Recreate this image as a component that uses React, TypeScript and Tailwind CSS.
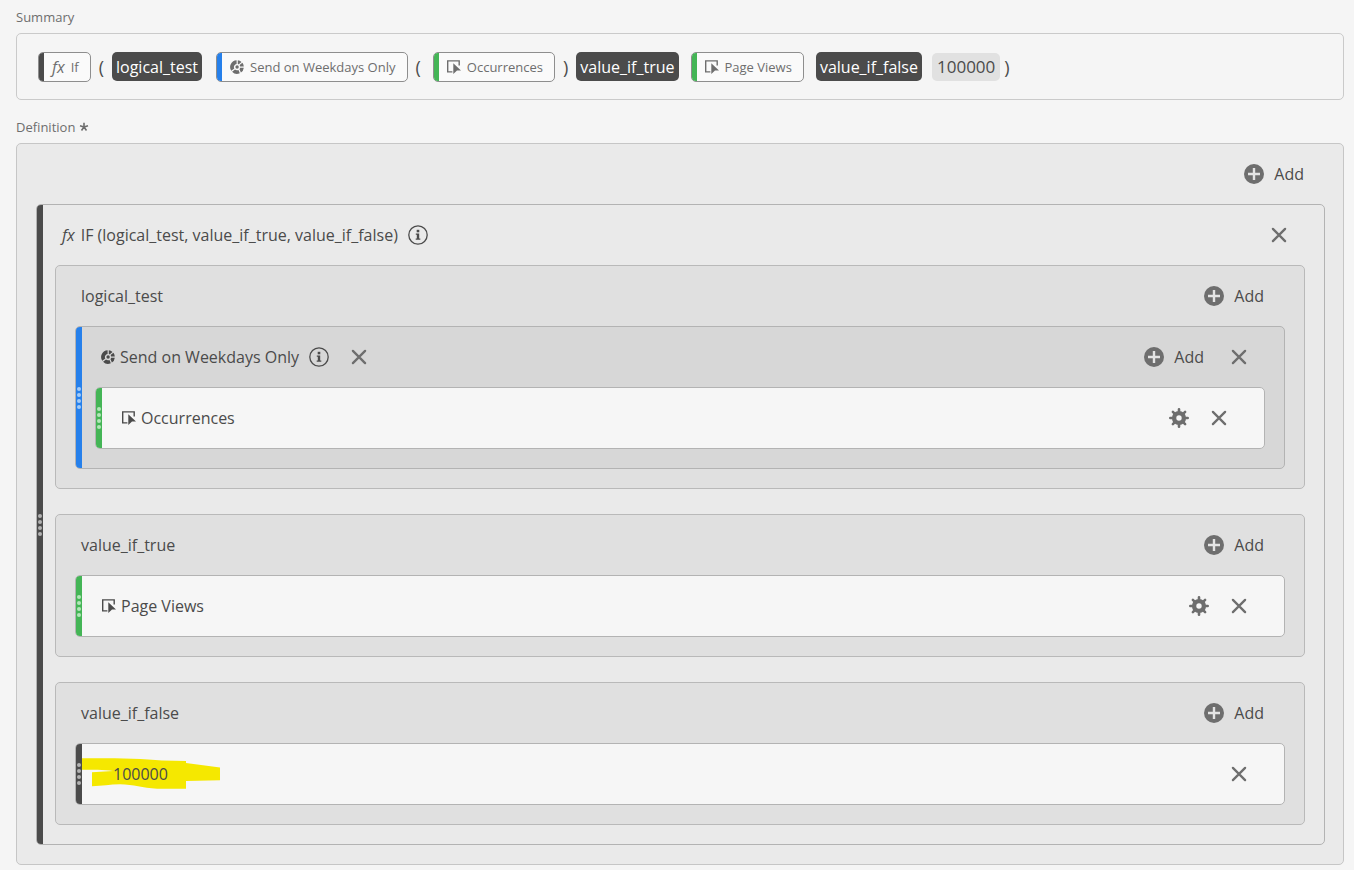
import type { ReactNode } from 'react'
import clsx from 'clsx'

type Accent = 'dark' | 'blue' | 'green'

const BAR_COLORS: Record<Accent, string> = {
  dark: 'bg-[#4b4b4b]',
  blue: 'bg-[#2680eb]',
  green: 'bg-[#44b556]',
}

const DOT_COLORS: Record<Accent, string> = {
  dark: 'bg-[#b3b3b3]',
  blue: 'bg-[#a3cbf8]',
  green: 'bg-[#b2e6b8]',
}

function FxMark({ className }: { className?: string }) {
  return <span className={clsx('text-[16px] italic', className)}>fx</span>
}

function MetricIcon() {
  return (
    <svg viewBox="0 0 14 14" className="size-3.5 shrink-0" aria-hidden="true">
      <path
        d="M5.4 11.9H0.7V0.9H12.2V5.6"
        fill="none"
        stroke="currentColor"
        strokeWidth="1.4"
      />
      <path d="M6.3 3.2L14 10.6H10L6.3 14Z" fill="currentColor" />
    </svg>
  )
}

function SegmentIcon() {
  return (
    <svg viewBox="0 0 14 14" className="size-3.5 shrink-0" aria-hidden="true">
      <path
        d="M6.6 0.2A6.8 6.8 0 0 0 1.3 10.8L4.3 8.6A3.2 3.2 0 0 1 6.6 3.9Z"
        fill="currentColor"
      />
      <path
        d="M2.1 11.7A6.8 6.8 0 0 0 9.8 13.2L8.5 9.9A3.2 3.2 0 0 1 5 9.5Z"
        fill="currentColor"
      />
      <path d="M10.9 12.6A6.8 6.8 0 0 0 13.8 7.7H10.1A3.2 3.2 0 0 1 9.5 9.2Z" fill="currentColor" />
      <path d="M13.8 6.5A6.8 6.8 0 0 0 12.4 2.8L9.6 5.1A3.2 3.2 0 0 1 10.1 6.5Z" fill="currentColor" />
      <path d="M11.5 1.9A6.8 6.8 0 0 0 7.8 0.2V3.9A3.2 3.2 0 0 1 8.8 4.3Z" fill="currentColor" />
      <circle cx="7.1" cy="7" r="1.7" fill="currentColor" />
    </svg>
  )
}

function InfoButton() {
  return (
    <button type="button" aria-label="Info" className="ml-2.5 size-5 text-[#4b4b4b]">
      <svg viewBox="0 0 20 20" className="size-5" aria-hidden="true">
        <circle cx="10" cy="10" r="9.2" fill="none" stroke="currentColor" strokeWidth="1.3" />
        <rect x="8.7" y="4.8" width="2.6" height="2.5" fill="currentColor" />
        <path d="M7.8 8.4H11.2V13.5H12.3V14.8H7.7V13.5H8.8V9.7H7.8Z" fill="currentColor" />
      </svg>
    </button>
  )
}

function CloseButton({ className }: { className?: string }) {
  return (
    <button type="button" aria-label="Remove" className={clsx('size-5 text-[#6e6e6e]', className)}>
      <svg viewBox="0 0 20 20" className="size-5" aria-hidden="true">
        <path
          d="M3.9 3.9L16.1 16.1M16.1 3.9L3.9 16.1"
          fill="none"
          stroke="currentColor"
          strokeWidth="2.3"
          strokeLinecap="round"
        />
      </svg>
    </button>
  )
}

function GearButton() {
  return (
    <button type="button" aria-label="Settings" className="size-5 text-[#6e6e6e]">
      <svg viewBox="0 0 20 20" className="size-5" aria-hidden="true">
        <circle cx="10" cy="10" r="4.9" fill="none" stroke="currentColor" strokeWidth="4.4" />
        <path
          d="M10 1.3V4M10 16V18.7M1.3 10H4M16 10H18.7M3.9 3.9L5.8 5.8M14.2 14.2L16.1 16.1M16.1 3.9L14.2 5.8M5.8 14.2L3.9 16.1"
          stroke="currentColor"
          strokeWidth="2.6"
          strokeLinecap="round"
        />
      </svg>
    </button>
  )
}

function AddButton() {
  return (
    <button type="button" className="flex items-center gap-2.5">
      <svg viewBox="0 0 20 20" className="size-5 text-[#6e6e6e]" aria-hidden="true">
        <circle cx="10" cy="10" r="10" fill="currentColor" />
        <path d="M10 4V16M4 10H16" stroke="#e4e4e4" strokeWidth="2.4" />
      </svg>
      Add
    </button>
  )
}

function DragBar({ accent }: { accent: Accent }) {
  return (
    <div
      className={clsx(
        'flex w-1.5 shrink-0 flex-col items-center justify-center gap-[2px]',
        BAR_COLORS[accent],
      )}
    >
      {[0, 1, 2, 3].map(dot => (
        <span key={dot} className={clsx('size-1 rounded-full', DOT_COLORS[accent])} />
      ))}
    </div>
  )
}

function Chip({ accent, children }: { accent: Accent; children: ReactNode }) {
  return (
    <span className="flex h-[30px] overflow-hidden rounded-[5px] border border-[#8e8e8e] bg-[#fafafa] text-[13px] text-[#6e6e6e]">
      <span className={clsx('w-[5px]', BAR_COLORS[accent])} />
      <span className="flex items-center gap-1.5 pr-[11px] pl-2">{children}</span>
    </span>
  )
}

function ArgTag({ children }: { children: ReactNode }) {
  return (
    <span className="flex h-[29px] items-center rounded-[5px] bg-[#4b4b4b] px-1 font-medium text-white">
      {children}
    </span>
  )
}

function Argument({ name, children }: { name: string; children: ReactNode }) {
  return (
    <section className="rounded-[5px] border border-[#b9b9b9] bg-[#e0e0e0] px-[19px] pb-[19px]">
      <div className="flex h-[60px] items-center justify-between pr-[21px] pl-1.5">
        <h3>{name}</h3>
        <AddButton />
      </div>
      {children}
    </section>
  )
}

function Item({
  accent,
  children,
  actions,
}: {
  accent: Accent
  children: ReactNode
  actions: ReactNode
}) {
  return (
    <div className="flex overflow-hidden rounded-[5px] border border-[#b3b3b3] bg-[#f6f6f6]">
      <DragBar accent={accent} />
      <div className="relative flex h-[60px] grow items-center justify-between pr-[35px] pl-5">
        {children}
        <div className="flex items-center gap-5">{actions}</div>
      </div>
    </div>
  )
}

function Highlight() {
  return (
    <svg
      viewBox="0 0 140 60"
      className="absolute top-0 left-0 h-[60px] w-[140px]"
      aria-hidden="true"
    >
      <path
        d="M0 14.3C28 14 60 14.5 80 16.5L104 17V19L138 23.5V36.3L104 37V44.8H75C60 44 52 40.5 38 40.3C28 40.3 20 42 10 42.2V28.2L31 27C22 25.5 10 26 0 25.8Z"
        fill="#f5e800"
      />
    </svg>
  )
}

function App() {
  return (
    <div className="min-h-screen bg-[#f5f5f5] pt-[7px] pr-[10px] pb-1 pl-4 font-['Open_Sans',sans-serif] text-[16px] leading-5 text-[#4b4b4b]">
      <h2 className="mb-1.5 text-[13px] leading-5 text-[#6e6e6e]">Summary</h2>
      <div className="flex min-h-[67px] flex-wrap items-center rounded-[5px] border border-[#cacaca] px-[21px]">
        <div className="flex items-center gap-2">
          <Chip accent="dark">
            <FxMark />
            If
          </Chip>
          <span className="text-[18px]">(</span>
          <ArgTag>logical_test</ArgTag>
        </div>
        <div className="ml-3.5 flex items-center gap-2">
          <Chip accent="blue">
            <SegmentIcon />
            Send on Weekdays Only
          </Chip>
          <span className="text-[18px]">(</span>
        </div>
        <div className="ml-3 flex items-center gap-2">
          <Chip accent="green">
            <MetricIcon />
            Occurrences
          </Chip>
          <span className="text-[18px]">)</span>
          <ArgTag>value_if_true</ArgTag>
        </div>
        <div className="ml-3 flex items-center gap-3">
          <Chip accent="green">
            <MetricIcon />
            Page Views
          </Chip>
          <ArgTag>value_if_false</ArgTag>
        </div>
        <div className="ml-2.5 flex items-center gap-1">
          <span className="rounded-[5px] bg-[#e1e1e1] px-[5px] py-1 text-[17px] leading-5">100000</span>
          <span className="text-[18px]">)</span>
        </div>
      </div>

      <h2 className="mt-[17px] mb-1.5 flex items-center gap-1 text-[13px] leading-5 text-[#6e6e6e]">
        Definition
        <svg viewBox="0 0 10 10" className="size-2.5" aria-hidden="true">
          <path
            d="M5 5V0.8M5 5L9 3.7M5 5L7.5 8.5M5 5L2.5 8.5M5 5L1 3.7"
            stroke="currentColor"
            strokeWidth="1.6"
          />
        </svg>
      </h2>
      <main className="rounded-[5px] border border-[#c6c6c6] bg-[#eaeaea] pr-[18px] pb-[19px] pl-[19px]">
        <div className="flex h-[60px] items-center justify-end pr-[21px]">
          <AddButton />
        </div>

        <div className="flex overflow-hidden rounded-[5px] border border-[#b3b3b3]">
          <DragBar accent="dark" />
          <div className="grow pr-[19px] pb-[19px] pl-3">
            <div className="flex h-[60px] items-center pr-4 pl-[7px]">
              <FxMark className="mr-1.5" />
              <h3>IF (logical_test, value_if_true, value_if_false)</h3>
              <InfoButton />
              <CloseButton className="ml-auto" />
            </div>

            <div className="flex flex-col gap-[25px]">
              <Argument name="logical_test">
                <div className="flex overflow-hidden rounded-[5px] border border-[#b3b3b3] bg-[#d7d7d7]">
                  <DragBar accent="blue" />
                  <div className="grow pr-[19px] pb-[19px] pl-[13px]">
                    <div className="flex h-[60px] items-center pr-4 pl-1.5">
                      <h4 className="flex items-center gap-[5px]">
                        <SegmentIcon />
                        Send on Weekdays Only
                      </h4>
                      <InfoButton />
                      <CloseButton className="ml-5" />
                      <div className="ml-auto flex items-center gap-[25px]">
                        <AddButton />
                        <CloseButton />
                      </div>
                    </div>
                    <Item
                      accent="green"
                      actions={
                        <>
                          <GearButton />
                          <CloseButton />
                        </>
                      }
                    >
                      <span className="flex items-center gap-[5px]">
                        <MetricIcon />
                        Occurrences
                      </span>
                    </Item>
                  </div>
                </div>
              </Argument>

              <Argument name="value_if_true">
                <Item
                  accent="green"
                  actions={
                    <>
                      <GearButton />
                      <CloseButton />
                    </>
                  }
                >
                  <span className="flex items-center gap-[5px]">
                    <MetricIcon />
                    Page Views
                  </span>
                </Item>
              </Argument>

              <Argument name="value_if_false">
                <Item accent="dark" actions={<CloseButton />}>
                  <Highlight />
                  <span className="relative pl-[11px]">100000</span>
                </Item>
              </Argument>
            </div>
          </div>
        </div>
      </main>
    </div>
  )
}

export default App
